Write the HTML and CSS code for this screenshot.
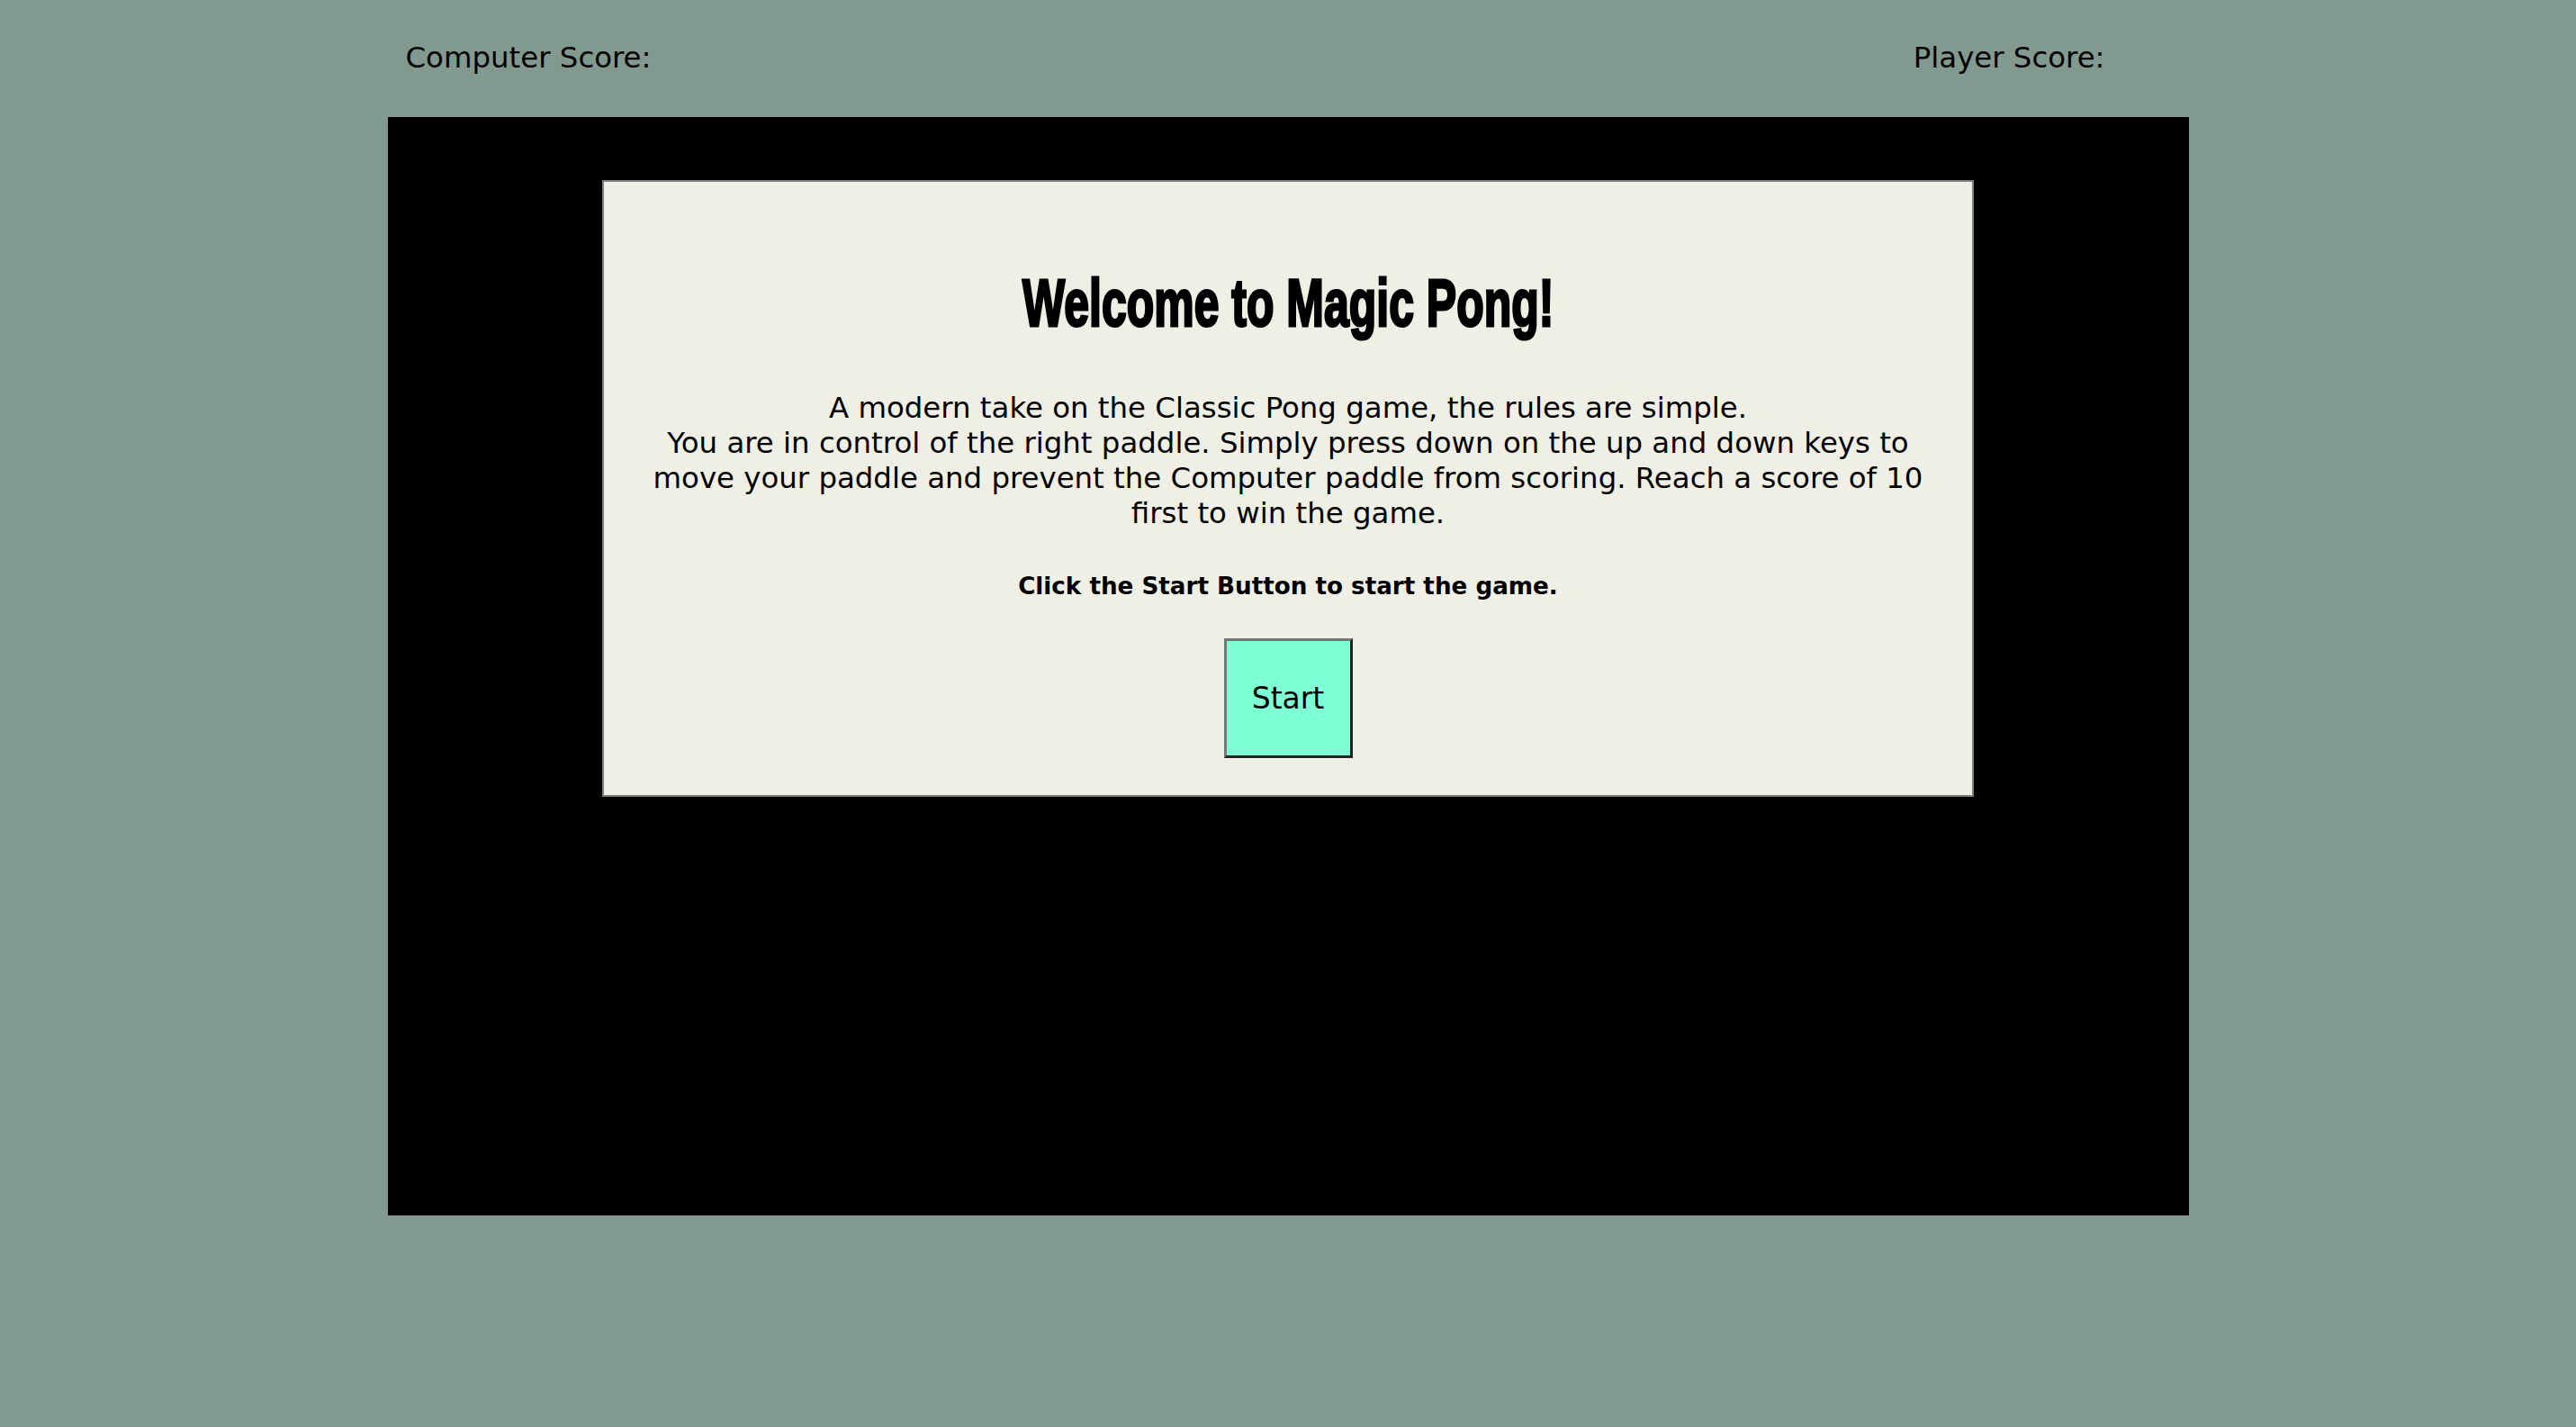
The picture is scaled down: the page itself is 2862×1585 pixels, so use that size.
FILE: index.html
```html
<!DOCTYPE html>
<html lang="en">
<head>
<meta charset="utf-8">
<title>Magic Pong</title>
<link rel="stylesheet" href="styles.css">
</head>
<body>
<div class="scores">
  <span class="score computer">Computer Score: <span class="num"></span></span>
  <span class="score player">Player Score: <span class="num"></span></span>
</div>
<div class="board">
  <div class="card">
    <h1 class="title"><span class="title-text">Welcome to Magic Pong!</span></h1>
    <p class="rules">A modern take on the Classic Pong game, the rules are simple.<br>You are in control of the right paddle. Simply press down on the up and down keys to<br>move your paddle and prevent the Computer paddle from scoring. Reach a score of 10<br>first to win the game.</p>
    <p class="hint">Click the Start Button to start the game.</p>
    <button class="start" type="button">Start</button>
  </div>
</div>
</body>
</html>
```
FILE: styles.css
```css
html, body {
  margin: 0;
  padding: 0;
}
body {
  background: #82998f;
  font-family: "DejaVu Sans", Verdana, sans-serif;
  color: #000;
  height: 1585px;
}
.scores {
  width: 2001px;
  margin: 0 auto;
  display: flex;
  justify-content: space-between;
  box-sizing: border-box;
  padding: 42px 93px 0 20px;
  height: 130px;
  font-size: 32.4px;
  line-height: 44px;
}
.board {
  width: 2001px;
  height: 1220px;
  margin: 0 auto;
  background: #000;
  box-sizing: border-box;
  padding-top: 70px;
  display: flex;
  justify-content: center;
  align-items: flex-start;
}
.card {
  width: 1524px;
  height: 685px;
  box-sizing: border-box;
  background: #efefe6;
  border: 2px solid #808080;
  display: flex;
  flex-direction: column;
  align-items: center;
  text-align: center;
  padding-top: 90px;
}
.title {
  margin: 0;
  height: 90px;
  font-family: "Liberation Sans Narrow", "Liberation Sans", sans-serif;
  font-weight: 700;
  font-size: 74px;
  line-height: 90px;
}
.title-text {
  display: inline-block;
  transform: scaleX(0.675);
  -webkit-text-stroke: 3px #000;
}
.rules {
  margin: 52px 0 0;
  font-size: 32.4px;
  line-height: 39px;
  white-space: nowrap;
}
.hint {
  margin: 45px 0 0;
  font-size: 26.2px;
  font-weight: 700;
  line-height: 32px;
}
.start {
  margin-top: 42px;
  width: 143px;
  height: 133px;
  background: #7fffd4;
  border: 3px solid;
  border-color: #777 #222 #222 #777;
  font-family: "DejaVu Sans", Verdana, sans-serif;
  font-size: 33px;
  color: #000;
  padding: 0;
}
```
